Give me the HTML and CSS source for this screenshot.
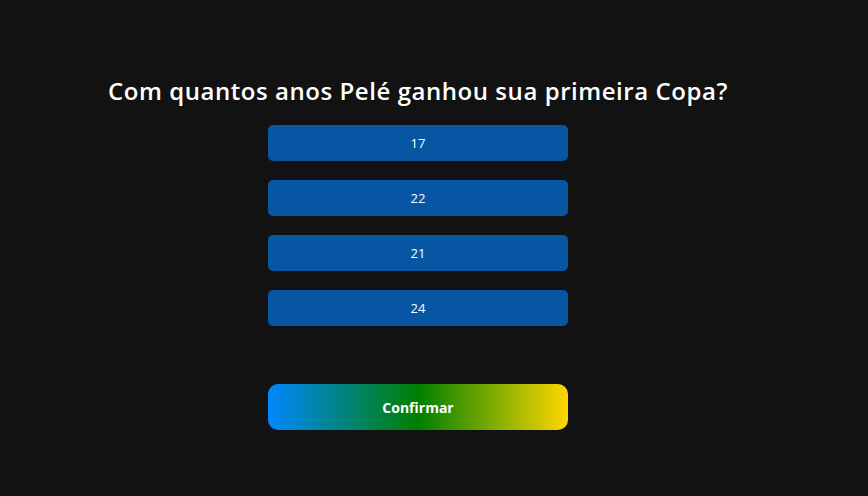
FILE: index.html
```html
<!DOCTYPE html>
<html lang="pt-BR">
<head>
<meta charset="utf-8">
<title>Quiz</title>
<link rel="stylesheet" href="styles.css">
</head>
<body>
<main class="quiz">
  <h1 class="question">Com quantos anos Pelé ganhou sua primeira Copa?</h1>
  <div class="options">
    <button class="option">17</button>
    <button class="option">22</button>
    <button class="option">21</button>
    <button class="option">24</button>
  </div>
  <button class="confirm">Confirmar</button>
</main>
</body>
</html>
```
FILE: styles.css
```css
html, body {
  margin: 0;
  padding: 0;
  background: #121212;
  height: 100%;
}
body {
  font-family: "Open Sans", "DejaVu Sans", sans-serif;
  color: #ffffff;
}
.quiz {
  width: 836px;
  display: flex;
  flex-direction: column;
  align-items: center;
  padding-top: 75px;
}
.question {
  margin: 0 0 18px;
  font-size: 24px;
  font-weight: 600;
  line-height: 32px;
  letter-spacing: 0.55px;
}
.options {
  display: flex;
  flex-direction: column;
  gap: 19px;
}
.option {
  width: 300px;
  height: 36px;
  border: none;
  border-radius: 5px;
  background: #0656a3;
  color: #ffffff;
  font-family: inherit;
  font-size: 13px;
  font-weight: 500;
  padding: 0;
}
.confirm {
  margin-top: 58px;
  width: 300px;
  height: 46px;
  border: none;
  border-radius: 10px;
  background: linear-gradient(90deg, #0088ff 0%, #008000 50%, #ffd700 100%);
  color: #ffffff;
  font-family: inherit;
  font-size: 14px;
  font-weight: 700;
  padding: 0;
}
```
